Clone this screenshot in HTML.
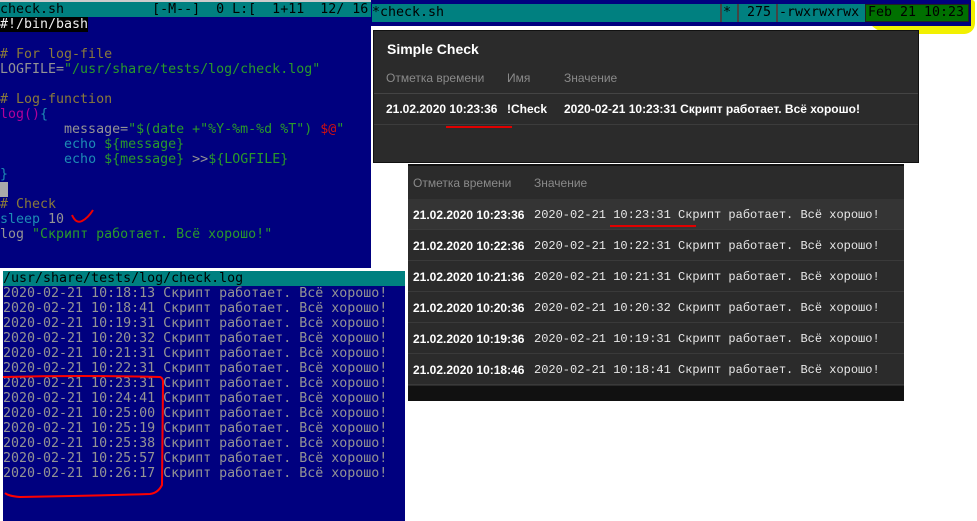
<!DOCTYPE html>
<html><head><meta charset="utf-8"><style>
*{margin:0;padding:0;box-sizing:border-box}
body{width:977px;height:521px;background:#fff;position:relative;overflow:hidden;font-family:"DejaVu Sans Mono",monospace}
.ed{position:absolute;background:#00007f;font-family:"DejaVu Sans Mono",monospace;font-size:13.3px;line-height:15px;color:#949494;overflow:hidden}
.ln{height:15px;white-space:pre;overflow:hidden}
.st{background:#008080;color:#000}
.cm{color:#8a7a3a}.gr{color:#2a9a2a}.mg{color:#b4009a}.tl{color:#1d8cb4}.rd{color:#d01010}
.pn{position:absolute;background:#2b2b2b;font-family:"Liberation Sans",Arial,sans-serif;color:#fff}
.hd{color:#8a8a8a;font-size:12px}
.row{position:absolute;left:0;right:0;height:31px;border-bottom:1px solid #3a3a3a;font-size:12px}
.row b{position:absolute;left:5px;top:9px}
.row span{position:absolute;left:126px;top:9px;font-family:"Liberation Mono",monospace;font-size:12px;color:#e8e8e8;white-space:pre}
.w{white-space:pre}
</style></head><body>
<div style="position:absolute;left:0;top:0;width:371px;height:2px;background:#ccc"></div>
<div class="ed" style="left:0;top:2px;width:371px;height:266px">
<div class="ln st">check.sh           [-M--]  0 L:[  1+11  12/ 16</div>
<div class="ln"><span style="background:#000;color:#eee">#!/bin/bash</span></div>
<div class="ln"> </div>
<div class="ln cm"># For log-file</div>
<div class="ln">LOGFILE=<span class="gr">"/usr/share/tests/log/check.log"</span></div>
<div class="ln"> </div>
<div class="ln cm"># Log-function</div>
<div class="ln"><span class="mg">log()</span><span class="tl">{</span></div>
<div class="ln">        message=<span class="gr">"$(date +"%Y-%m-%d %T") </span><span class="rd">$@</span><span class="gr">"</span></div>
<div class="ln">        <span class="tl">echo</span> <span class="gr">${message}</span></div>
<div class="ln">        <span class="tl">echo</span> <span class="gr">${message}</span> &gt;&gt;<span class="gr">${LOGFILE}</span></div>
<div class="ln tl">}</div>
<div class="ln"><span style="background:#aaa"> </span></div>
<div class="ln cm"># Check</div>
<div class="ln"><span class="tl">sleep</span> 10</div>
<div class="ln">log <span class="gr">"Скрипт работает. Всё хорошо!"</span></div>
</div>
<div class="ed" style="left:3px;top:271px;width:402px;height:250px">
<div class="ln st">/usr/share/tests/log/check.log</div>
<div class="ln">2020-02-21 10:18:13 Скрипт работает. Всё хорошо!</div>
<div class="ln">2020-02-21 10:18:41 Скрипт работает. Всё хорошо!</div>
<div class="ln">2020-02-21 10:19:31 Скрипт работает. Всё хорошо!</div>
<div class="ln">2020-02-21 10:20:32 Скрипт работает. Всё хорошо!</div>
<div class="ln">2020-02-21 10:21:31 Скрипт работает. Всё хорошо!</div>
<div class="ln">2020-02-21 10:22:31 Скрипт работает. Всё хорошо!</div>
<div class="ln">2020-02-21 10:23:31 Скрипт работает. Всё хорошо!</div>
<div class="ln">2020-02-21 10:24:41 Скрипт работает. Всё хорошо!</div>
<div class="ln">2020-02-21 10:25:00 Скрипт работает. Всё хорошо!</div>
<div class="ln">2020-02-21 10:25:19 Скрипт работает. Всё хорошо!</div>
<div class="ln">2020-02-21 10:25:38 Скрипт работает. Всё хорошо!</div>
<div class="ln">2020-02-21 10:25:57 Скрипт работает. Всё хорошо!</div>
<div class="ln">2020-02-21 10:26:17 Скрипт работает. Всё хорошо!</div>
</div>
<!-- top right bar -->
<div style="position:absolute;left:862px;top:0;width:113px;height:34px;background:#f2f000;border-radius:4px 4px 14px 40px"></div>
<div style="position:absolute;left:371px;top:0;width:600px;height:26px;background:#00007f"></div>
<div class="ed w" style="left:372px;top:4px;width:596px;height:18px;background:#008080;color:#000;line-height:18px">*check.sh</div>
<div style="position:absolute;left:720px;top:4px;width:2px;height:18px;background:#444"></div>
<div style="position:absolute;left:737px;top:4px;width:2px;height:18px;background:#444"></div>
<div style="position:absolute;left:776px;top:4px;width:2px;height:18px;background:#444"></div>
<div class="ed w" style="left:723px;top:4px;background:none;color:#000;line-height:18px">*  275 -rwxrwxrwx</div>
<div class="ed w" style="left:865px;top:4px;width:104px;height:18px;background:#007000;color:#000;line-height:16px;border:1px solid #222;padding-left:2px">Feb 21 10:23</div>
<!-- simple check -->
<div class="pn" style="left:373px;top:30px;width:546px;height:133px;border:1px solid #111">
<div style="position:absolute;left:13px;top:10px;font-weight:bold;font-size:14px">Simple Check</div>
<div class="hd" style="position:absolute;left:12px;top:40px">Отметка времени</div>
<div class="hd" style="position:absolute;left:133px;top:40px">Имя</div>
<div class="hd" style="position:absolute;left:190px;top:40px">Значение</div>
<div style="position:absolute;left:0;right:0;top:62px;height:1px;background:#444"></div>
<div style="position:absolute;left:12px;top:71px;font-size:12px;font-weight:bold">21.02.2020 10:23:36</div>
<div style="position:absolute;left:133px;top:71px;font-size:12px;font-weight:bold">!Check</div>
<div style="position:absolute;left:190px;top:71px;font-size:12px;font-weight:bold">2020-02-21 10:23:31 Скрипт работает. Всё хорошо!</div>
<div style="position:absolute;left:0;right:0;top:93px;height:1px;background:#3c3c3c"></div>
<div style="position:absolute;left:72px;top:95px;width:66px;height:2px;background:#e00000"></div>
</div>
<!-- second panel -->
<div class="pn" style="left:408px;top:164px;width:496px;height:235px;border-top:2px solid #111">
<div class="hd" style="position:absolute;left:5px;top:10px">Отметка времени</div>
<div class="hd" style="position:absolute;left:126px;top:10px">Значение</div>
<div class="row" style="top:33px;background:#343434"><b>21.02.2020 10:23:36</b><span>2020-02-21 10:23:31 Скрипт работает. Всё хорошо!</span></div>
<div style="position:absolute;left:202px;top:59px;width:86px;height:2px;background:#e00000"></div>
<div class="row" style="top:64px"><b>21.02.2020 10:22:36</b><span>2020-02-21 10:22:31 Скрипт работает. Всё хорошо!</span></div>
<div class="row" style="top:95px"><b>21.02.2020 10:21:36</b><span>2020-02-21 10:21:31 Скрипт работает. Всё хорошо!</span></div>
<div class="row" style="top:126px"><b>21.02.2020 10:20:36</b><span>2020-02-21 10:20:32 Скрипт работает. Всё хорошо!</span></div>
<div class="row" style="top:157px"><b>21.02.2020 10:19:36</b><span>2020-02-21 10:19:31 Скрипт работает. Всё хорошо!</span></div>
<div class="row" style="top:188px"><b>21.02.2020 10:18:46</b><span>2020-02-21 10:18:41 Скрипт работает. Всё хорошо!</span></div>
<div style="position:absolute;left:0;right:0;top:220px;height:15px;background:#111"></div>
</div>
<svg style="position:absolute;left:0;top:0" width="977" height="521">
<path d="M72 215 Q76 224 82 221 Q88 218 93 210" stroke="#e00" stroke-width="2" fill="none"/>
<path d="M3 377 Q80 375 160 377 Q163 378 163 382 L162 485 Q158 493 150 494 Q80 496 20 497 Q8 496 5 493" stroke="#f00" stroke-width="2" fill="none"/>
</svg>
</body></html>
